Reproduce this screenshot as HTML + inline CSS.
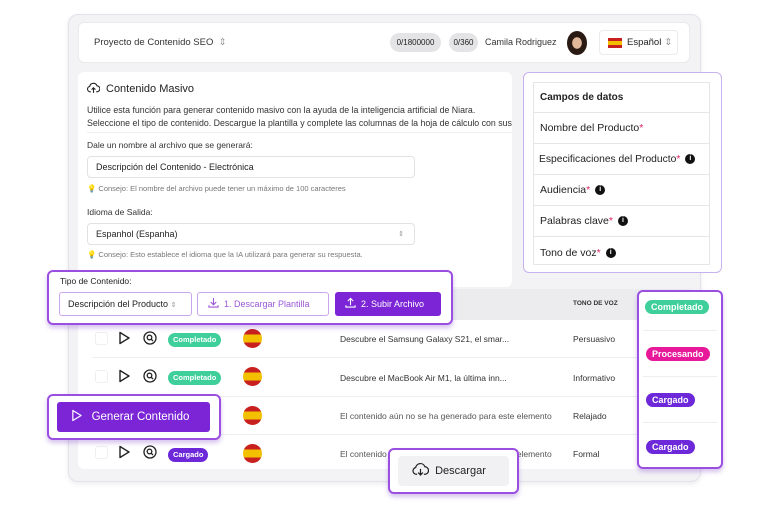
<!DOCTYPE html>
<html><head><meta charset="utf-8"><style>
*{box-sizing:border-box;margin:0;padding:0}
body{width:768px;height:508px;background:#fff;font-family:"Liberation Sans",sans-serif;color:#222;position:relative;overflow:hidden}
.a{position:absolute}
.pop{position:absolute;background:#fff;border:2px solid #9b4fe0;border-radius:6px;box-shadow:0 3px 5px rgba(120,60,200,.3)}
.badge{position:absolute;color:#fff;font-size:8px;font-weight:bold;border-radius:8px;padding:2px 6px;line-height:10px}
.g{background:#3ecf9a}.p{background:#6d28d9}.k{background:#e8189a}
.t{font-size:9px;color:#333}
.sm{font-size:7.5px;color:#777}
.inp{position:absolute;border:1px solid #e2e2e6;border-radius:4px;background:#fff;font-size:9px;padding-left:8px;display:flex;align-items:center}
.flag{position:absolute;width:19px;height:19px;border-radius:50%;background:linear-gradient(#c8201e 0 28%,#f3c000 28% 72%,#c8201e 72%)}
.cb{position:absolute;width:13px;height:13px;border:1px solid #eee;border-radius:3px}
.row{position:absolute;left:92px;width:590px;height:1px;background:#eee}
.cell{position:absolute;left:533px;width:177px;height:31px;border-bottom:1px solid #e6e6e6;font-size:10.5px;display:flex;align-items:center;padding-left:7px}
.cell i{color:#e0245e;font-style:normal}
.info{display:inline-block;width:10px;height:10px;border-radius:50%;background:#111;color:#fff;font-size:7px;text-align:center;line-height:10px;font-weight:bold;margin-left:5px}
.rb{font-size:7.5px;padding:2px 5px}
</style></head><body>
<div class="a" style="left:68px;top:14px;width:633px;height:468px;background:#f3f3f6;border:1px solid #e2e2ea;border-radius:10px;box-shadow:0 2px 6px rgba(0,0,0,.08)"></div>
<div class="a" style="left:78px;top:22px;width:612px;height:41px;background:#fff;border-radius:6px;border:1px solid #eaeaea"></div>
<div class="a t" style="left:94px;top:37px;font-size:9.5px">Proyecto de Contenido SEO &nbsp;<span style="color:#999">⇕</span></div>
<div class="a" style="left:390px;top:33px;width:51px;height:19px;background:#e4e4e6;border-radius:10px;font-size:8px;text-align:center;line-height:19px">0/1800000</div>
<div class="a" style="left:449px;top:33px;width:29px;height:19px;background:#e4e4e6;border-radius:10px;font-size:8px;text-align:center;line-height:19px">0/360</div>
<div class="a t" style="left:485px;top:37px">Camila Rodriguez</div>
<div class="a" style="left:567px;top:31px;width:20px;height:24px;border-radius:50%;background:radial-gradient(ellipse at 50% 50%,#e2b89a 0 32%,#2a1a14 36%)"></div>
<div class="a" style="left:599px;top:30px;width:79px;height:25px;border:1px solid #eaeaea;border-radius:4px;font-size:9.5px;display:flex;align-items:center;padding-left:8px"><span style="display:inline-block;width:14px;height:10px;background:linear-gradient(#c8201e 0 28%,#f3c000 28% 72%,#c8201e 72%);margin-right:5px"></span>Español <span style="color:#999;margin-left:3px">⇕</span></div>

<div class="a" style="left:78px;top:72px;width:434px;height:215px;background:#fff;border-radius:6px"></div>
<svg class="a" style="left:87px;top:82px" width="13" height="12" viewBox="0 0 24 22" fill="none" stroke="#222" stroke-width="2"><path d="M7 18H6a5 5 0 0 1-1-9.9A7 7 0 0 1 18.5 7 4.5 4.5 0 0 1 18 18h-1"/><path d="M12 20v-9M8.5 14l3.5-3.5 3.5 3.5"/></svg>
<div class="a" style="left:106px;top:83px;font-size:11px">Contenido Masivo</div>
<div class="a t" style="left:87px;top:104px;line-height:13px;font-size:8.8px;white-space:nowrap">Utilice esta función para generar contenido masivo con la ayuda de la inteligencia artificial de Niara.<br>Seleccione el tipo de contenido. Descargue la plantilla y complete las columnas de la hoja de cálculo con sus</div>
<div class="a" style="left:87px;top:132px;width:425px;height:1px;background:#eee"></div>
<div class="a t" style="left:87px;top:140px;font-size:8.5px">Dale un nombre al archivo que se generará:</div>
<div class="inp" style="left:87px;top:156px;width:328px;height:22px">Descripción del Contenido - Electrónica</div>
<div class="a sm" style="left:87px;top:184px">💡 Consejo: El nombre del archivo puede tener un máximo de 100 caracteres</div>
<div class="a t" style="left:87px;top:207px;font-size:8.5px">Idioma de Salida:</div>
<div class="inp" style="left:87px;top:223px;width:328px;height:22px">Espanhol (Espanha)<span style="position:absolute;right:10px;color:#999;font-size:7px">⇕</span></div>
<div class="a sm" style="left:87px;top:250px">💡 Consejo: Esto establece el idioma que la IA utilizará para generar su respuesta.</div>

<div class="pop" style="left:523px;top:72px;width:199px;height:201px;border-width:1.5px;border-color:#c9b0ee;box-shadow:none"></div>
<div class="a" style="left:533px;top:82px;width:177px;height:183px;border:1px solid #e6e6e6"></div>
<div class="cell" style="top:82px;font-weight:bold;font-size:10px">Campos de datos</div>
<div class="cell" style="top:113px">Nombre del Producto<i>*</i></div>
<div class="cell" style="top:144px;padding-left:6px;font-size:10.3px">Especificaciones del Producto<i>*</i><span class="info">i</span></div>
<div class="cell" style="top:175px">Audiencia<i>*</i><span class="info">i</span></div>
<div class="cell" style="top:206px">Palabras clave<i>*</i><span class="info">i</span></div>
<div class="cell" style="top:237px;border-bottom:none">Tono de voz<i>*</i><span class="info">i</span></div>

<div class="a" style="left:78px;top:289px;width:612px;height:180px;background:#fff;border-radius:6px"></div>
<div class="a" style="left:78px;top:289px;width:612px;height:31px;background:#ececef"></div>
<div class="a" style="left:573px;top:300px;font-size:6.5px;font-weight:bold;color:#333">TONO DE VOZ</div>

<div class="cb" style="left:95px;top:332px"></div>
<svg class="a" style="left:118px;top:331px" width="12" height="14" viewBox="0 0 12 14"><path d="M2 1.5L11 7 2 12.5z" fill="none" stroke="#222" stroke-width="1.4" stroke-linejoin="round"/></svg>
<svg class="a" style="left:143px;top:331px" width="14" height="14" viewBox="0 0 14 14" fill="none" stroke="#222" stroke-width="1.3"><circle cx="7" cy="7" r="6"/><circle cx="6.5" cy="6.5" r="2.3"/><path d="M8.3 8.3L10 10"/></svg>
<div class="badge g rb" style="left:168px;top:333px">Completado</div>
<div class="flag" style="left:243px;top:329px"></div>
<div class="a t" style="left:340px;top:334px;font-size:8.5px">Descubre el Samsung Galaxy S21, el smar...</div>
<div class="a t" style="left:573px;top:334px;font-size:8.5px">Persuasivo</div>
<div class="row" style="top:357px"></div>

<div class="cb" style="left:95px;top:370px"></div>
<svg class="a" style="left:118px;top:369px" width="12" height="14" viewBox="0 0 12 14"><path d="M2 1.5L11 7 2 12.5z" fill="none" stroke="#222" stroke-width="1.4" stroke-linejoin="round"/></svg>
<svg class="a" style="left:143px;top:369px" width="14" height="14" viewBox="0 0 14 14" fill="none" stroke="#222" stroke-width="1.3"><circle cx="7" cy="7" r="6"/><circle cx="6.5" cy="6.5" r="2.3"/><path d="M8.3 8.3L10 10"/></svg>
<div class="badge g rb" style="left:168px;top:371px">Completado</div>
<div class="flag" style="left:243px;top:367px"></div>
<div class="a t" style="left:340px;top:373px;font-size:8.5px">Descubre el MacBook Air M1, la última inn...</div>
<div class="a t" style="left:573px;top:373px;font-size:8.5px">Informativo</div>
<div class="row" style="top:396px"></div>

<div class="flag" style="left:243px;top:406px"></div>
<div class="a t" style="left:340px;top:411px;font-size:8.5px;color:#555">El contenido aún no se ha generado para este elemento</div>
<div class="a t" style="left:573px;top:411px;font-size:8.5px">Relajado</div>
<div class="row" style="top:434px"></div>

<div class="cb" style="left:95px;top:446px"></div>
<svg class="a" style="left:118px;top:445px" width="12" height="14" viewBox="0 0 12 14"><path d="M2 1.5L11 7 2 12.5z" fill="none" stroke="#222" stroke-width="1.4" stroke-linejoin="round"/></svg>
<svg class="a" style="left:143px;top:445px" width="14" height="14" viewBox="0 0 14 14" fill="none" stroke="#222" stroke-width="1.3"><circle cx="7" cy="7" r="6"/><circle cx="6.5" cy="6.5" r="2.3"/><path d="M8.3 8.3L10 10"/></svg>
<div class="badge p rb" style="left:168px;top:448px">Cargado</div>
<div class="flag" style="left:243px;top:444px"></div>
<div class="a t" style="left:340px;top:449px;font-size:8.5px;color:#555">El contenido aún no se ha generado para este elemento</div>
<div class="a t" style="left:573px;top:449px;font-size:8.5px">Formal</div>

<div class="pop" style="left:47px;top:270px;width:406px;height:55px"></div>
<div class="a" style="left:60px;top:276px;font-size:8.5px">Tipo de Contenido:</div>
<div class="a" style="left:59px;top:292px;width:133px;height:24px;border:1px solid #c9a8ec;border-radius:3px;font-size:9px;line-height:22px;padding-left:8px">Descripción del Producto <span style="color:#999;font-size:7px">⇕</span></div>
<div class="a" style="left:197px;top:292px;width:132px;height:24px;border:1px solid #c9a8ec;border-radius:3px;font-size:9px;line-height:22px;color:#9b59d9;padding-left:10px"><svg width="11" height="11" viewBox="0 0 12 12" fill="none" stroke="#9b59d9" stroke-width="1.2" style="vertical-align:-1px"><path d="M6 1v7M3 5.5L6 8.5 9 5.5M1 9v2h10V9"/></svg>&nbsp; 1. Descargar Plantilla</div>
<div class="a" style="left:335px;top:292px;width:106px;height:24px;background:#7b25d6;border-radius:3px;font-size:9px;line-height:24px;color:#fff;padding-left:10px"><svg width="11" height="11" viewBox="0 0 12 12" fill="none" stroke="#fff" stroke-width="1.2" style="vertical-align:-1px"><path d="M6 9V2M3 4.5L6 1.5 9 4.5M1 9v2h10V9"/></svg>&nbsp; 2. Subir Archivo</div>

<div class="pop" style="left:47px;top:394px;width:174px;height:46px"></div>
<div class="a" style="left:57px;top:402px;width:153px;height:30px;background:#7b25d6;border-radius:3px;color:#fff;font-size:11.5px;line-height:30px;padding-left:14px"><svg width="11" height="13" viewBox="0 0 12 14" style="vertical-align:-2px"><path d="M2 1.5L11 7 2 12.5z" fill="none" stroke="#fff" stroke-width="1.3" stroke-linejoin="round"/></svg>&nbsp;&nbsp; Generar Contenido</div>

<div class="pop" style="left:388px;top:448px;width:131px;height:46px"></div>
<div class="a" style="left:398px;top:456px;width:111px;height:30px;background:#f1f1f3;border-radius:4px;font-size:11px;line-height:30px;padding-left:14px"><svg width="17" height="15" viewBox="0 0 24 22" fill="none" stroke="#222" stroke-width="1.8" style="vertical-align:-3px"><path d="M7 18H6a5 5 0 0 1-1-9.9A7 7 0 0 1 18.5 7 4.5 4.5 0 0 1 18 18h-1"/><path d="M12 10v9M8.5 15.5l3.5 3.5 3.5-3.5"/></svg>&nbsp; Descargar</div>

<div class="pop" style="left:637px;top:290px;width:86px;height:179px"></div>
<div class="badge g" style="left:645px;top:300px;font-size:9px;padding:2px 6px">Completado</div>
<div class="a" style="left:643px;top:330px;width:74px;height:1px;background:#eee"></div>
<div class="badge k" style="left:646px;top:347px;font-size:9px;padding:2px 6px">Procesando</div>
<div class="a" style="left:643px;top:376px;width:74px;height:1px;background:#eee"></div>
<div class="badge p" style="left:646px;top:393px;font-size:9px;padding:2px 6px">Cargado</div>
<div class="a" style="left:643px;top:422px;width:74px;height:1px;background:#eee"></div>
<div class="badge p" style="left:646px;top:440px;font-size:9px;padding:2px 6px">Cargado</div>
</body></html>
